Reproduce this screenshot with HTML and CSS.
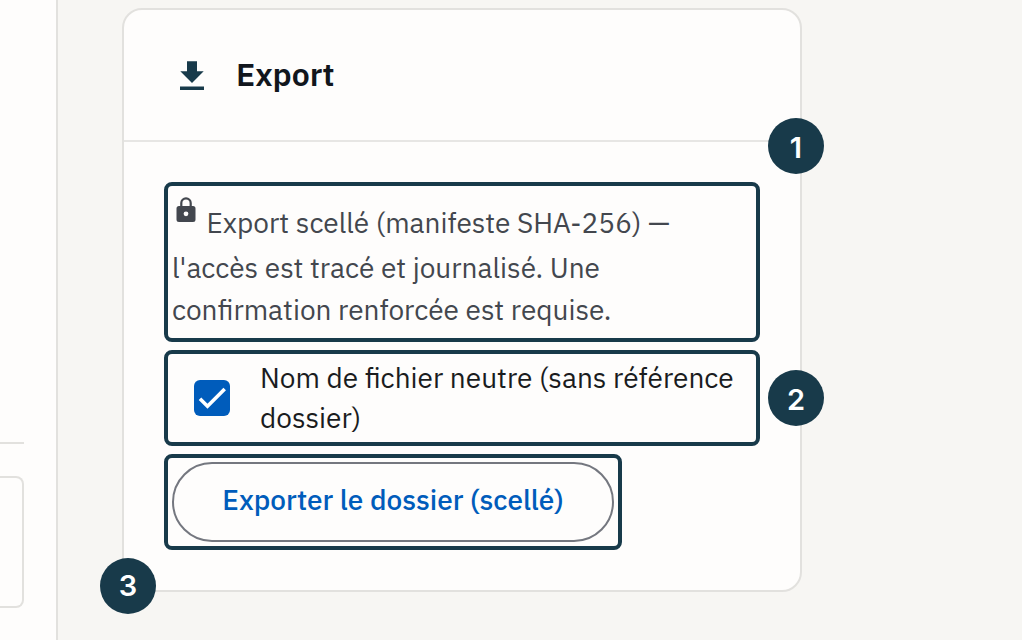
FILE: index.html
```html
<!DOCTYPE html>
<html lang="fr">
<head>
<meta charset="utf-8">
<title>Export</title>
<link rel="stylesheet" href="styles.css">
</head>
<body>
<aside class="side">
  <div class="side-rule"></div>
  <div class="side-box"></div>
</aside>
<main class="main">
  <section class="card">
    <header class="card-head">
      <svg class="download" viewBox="0 0 24 29" aria-hidden="true"><path d="M7 .3h10v10h6.700L12 21.900 .3 10.300H7zM0 25.500h24v3.400H0z"/></svg>
      <h1 class="title">Export</h1>
    </header>
    <div class="card-body">
      <div class="frame notice">
        <svg class="lock" viewBox="0 0 20 26" aria-hidden="true"><path fill-rule="evenodd" d="M4.200 9V6a5.800 5.800 0 0 1 11.600 0v3h1.200a2.500 2.500 0 0 1 2.500 2.500v11a2.500 2.500 0 0 1-2.500 2.500H3a2.500 2.500 0 0 1-2.500-2.500v-11A2.500 2.500 0 0 1 3 9zM6.400 9h7.200V6a3.600 3.600 0 0 0-7.200 0zM10 14.400a2.400 2.400 0 1 0 0 4.800 2.400 2.400 0 0 0 0-4.800z"/></svg>
        <p class="text"><span class="line first">Export scellé (manifeste SHA-256) —</span>
        <span class="line second">l'accès est tracé et journalisé. Une</span>
        <span class="line third">confirmation renforcée est requise.</span></p>
      </div>
      <label class="frame option">
        <span class="check"><svg viewBox="0 0 36 36" aria-hidden="true"><path d="M6 18.800 13.500 26.300 30.700 9.100"/></svg></span>
        <span class="option-text"><span class="line name">Nom de fichier neutre (sans référence</span> <span class="line name-end">dossier)</span></span>
      </label>
      <div class="frame action">
        <button class="button" type="button">Exporter le dossier (scellé)</button>
      </div>
    </div>
    <span class="badge one">1</span>
    <span class="badge two">2</span>
    <span class="badge three">3</span>
  </section>
</main>
</body>
</html>
```

FILE: styles.css
```css
* { box-sizing: border-box; }
body {
  margin: 0;
  width: 1022px;
  height: 640px;
  overflow: hidden;
  display: flex;
  background: #f7f6f3;
  font-family: "IBM Plex Sans", Roboto, sans-serif;
  font-size: 28px;
  color: #1a1c1e;
}
.side {
  width: 58px;
  border-right: 2px solid #e2e1de;
  background: #fefdfc;
  padding-top: 442px;
}
.side-rule { width: 24px; height: 2px; background: #e2e1de; }
.side-box {
  width: 24px;
  height: 132px;
  margin-top: 32px;
  border: 2px solid #e2e1de;
  border-left: 0;
  border-radius: 0 8px 8px 0;
}
.main { flex: 1; padding: 8px 0 0 64px; }
.card {
  position: relative;
  width: 680px;
  height: 584px;
  border: 2px solid #e2e1de;
  border-radius: 20px;
  background: #fefdfc;
}
.card-head {
  height: 132px;
  display: flex;
  align-items: center;
  gap: 32px;
  padding-left: 56px;
  border-bottom: 2px solid #e7e6e4;
}
.download { width: 24px; height: 29px; fill: #183a4a; }
.title { margin: -2px 0 0; font-size: 32px; font-weight: 600; color: #11161d; }
.card-body {
  display: flex;
  flex-direction: column;
  align-items: flex-start;
  gap: 8px;
  padding: 40px;
}
.frame { border: 4px solid #183a4a; border-radius: 8px; width: 596px; }
.notice { height: 160px; display: flex; padding: 11px 4px 0; color: #43474e; }
.lock { flex: none; width: 20px; height: 26px; margin: 0 -24px 0 4px; fill: #43474e; }
.text { margin: 5px 0 0; }
.line { display: block; white-space: nowrap; line-height: 42px; }
.first { padding-left: 34.500px; margin-bottom: 3px; }
.option { height: 96px; display: flex; align-items: center; padding-left: 26px; gap: 30px; }
.check { width: 36px; height: 36px; border-radius: 6px; background: #005cbb; }
.check svg { display: block; fill: none; stroke: #fff; stroke-width: 3.600; }
.option .line { line-height: 40px; }
.action { width: 458px; height: 96px; padding: 4px; }
.button {
  width: 442px;
  height: 80px;
  border: 2px solid #74777f;
  border-radius: 40px;
  background: transparent;
  padding: 0 0 6px;
  font: inherit;
  font-weight: 500;
  color: #005cbb;
  white-space: nowrap;
}
.badge {
  position: absolute;
  width: 56px;
  height: 56px;
  border-radius: 50%;
  background: #183a4a;
  color: #fff;
  font: 600 29px/56px Inter, sans-serif;
  text-align: center;
}
.one { left: 644px; top: 108px; line-height: 59px; }
.two { left: 644px; top: 360px; line-height: 59px; }
.three { left: -24px; top: 548px; }
```
